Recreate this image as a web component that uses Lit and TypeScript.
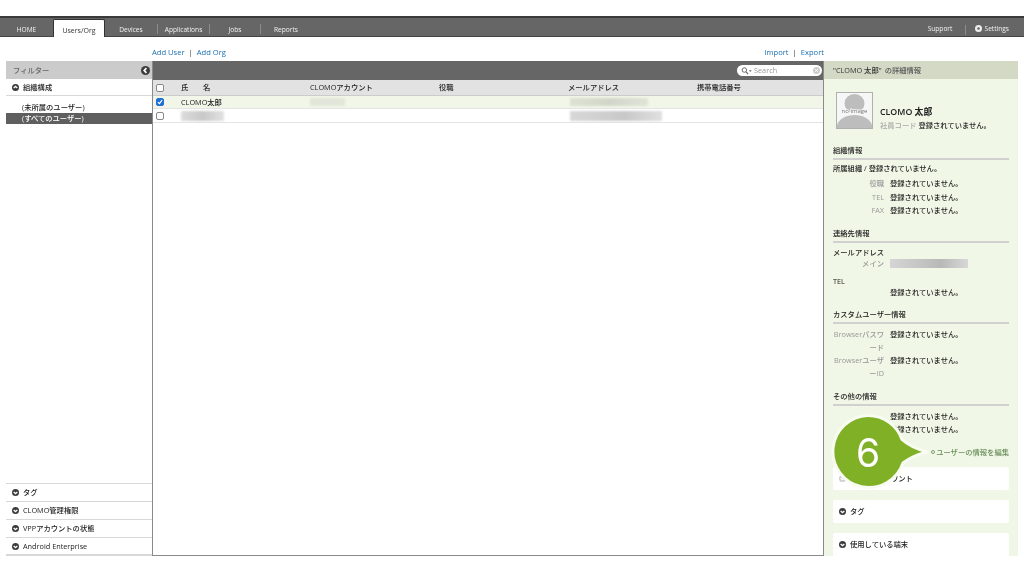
import { LitElement, html, css, svg } from "lit";
import { customElement } from "lit/decorators.js";

const dot = (dir: "up" | "down" | "left", size = 7) => {
  const p = dir === "up" ? "M2.4 5.8 L5 3.3 L7.6 5.8" : dir === "down" ? "M2.4 4.2 L5 6.7 L7.6 4.2" : "M6 2.4 L3.6 5 L6 7.6";
  return html`<svg class="dot" width=${size} height=${size} viewBox="0 0 10 10">
    <circle cx="5" cy="5" r="5" fill="#3c3c3c"></circle>
    ${svg`<path d=${p} fill="none" stroke="#fff" stroke-width="1.9"></path>`}
  </svg>`;
};

const NONE = "登録されていません。";

@customElement("app-root")
export class AppRoot extends LitElement {
  static styles = css`
    :host {
      display: block;
      width: 1024px;
      height: 576px;
      overflow: hidden;
      position: relative;
      background: #fff;
      color: #222;
      font-family: "Open Sans", "Noto Sans CJK JP", sans-serif;
      font-size: 7.3px;
      font-weight: 500;
      line-height: 11px;
      filter: blur(0.25px);
    }
    .dot { flex: none; display: block; }
    .nav {
      margin-top: 16px;
      height: 21px;
      box-sizing: border-box;
      border-top: 2px solid #3a3a3a;
      border-bottom: 1px solid #444;
      background: #666;
      display: flex;
      align-items: stretch;
      color: #f2f2f2;
      font-size: 6.6px;
    }
    .tab { display: flex; align-items: center; justify-content: center; padding-top: 4px; box-sizing: border-box; flex: none; }
    .tab.home { width: 53px; }
    .tab.active {
      width: 52px;
      margin-top: 1px;
      margin-bottom: -1px;
      padding-top: 3px;
      background: #fff;
      color: #333;
      border: 1px solid #333;
      border-bottom: none;
      border-radius: 2px 2px 0 0;
      font-size: 7px;
    }
    .tab.devices { width: 52px; }
    .sep { width: 1px; height: 10px; background: #8c8c8c; flex: none; align-self: center; margin-top: 3px; }
    .tab.apps { width: 51px; }
    .tab.jobs { width: 50px; }
    .tab.reports { width: 50px; }
    .nav-right { margin-left: auto; display: flex; align-items: center; padding-top: 3px; }
    .support { width: 57px; display: flex; justify-content: center; padding-left: 8px; box-sizing: border-box; }
    .settings { display: flex; align-items: center; gap: 3px; padding: 0 15px 0 9px; }
    .settings svg { display: block; }
    .links {
      height: 24px;
      box-sizing: border-box;
      padding: 6px 200px 0 152px;
      display: flex;
      align-items: center;
      justify-content: space-between;
      color: #1a6fb0;
      font-size: 7.6px;
    }
    .links .group { display: flex; gap: 4px; align-items: center; }
    .links i { font-style: normal; color: #333; }
    .main { display: flex; margin-left: 6px; width: 1012px; height: 495px; }
    .filter { width: 146px; flex: none; display: flex; flex-direction: column; }
    .filter-head {
      height: 18px;
      background: #cbcbcb;
      color: #666;
      display: flex;
      align-items: center;
      justify-content: space-between;
      padding: 0 2px 0 7px;
      flex: none;
    }
    .frow {
      height: 18px;
      flex: none;
      box-sizing: border-box;
      border-bottom: 1px solid #d8d8d8;
      display: flex;
      align-items: center;
      gap: 4px;
      padding: 0 0 1px 6px;
    }
    .frow.head { height: 17px; padding: 1px 0 0 6px; }
    .frow.last { border-bottom: 2px solid #d8d8d8; padding-bottom: 0; }
    .org { margin-top: 6px; flex: 1; }
    .org div { height: 11px; line-height: 11px; padding-left: 16px; }
    .org .sel { background: #5f5f5f; color: #fff; }
    .bottom { border-top: 1px solid #d8d8d8; }
    .list {
      width: 672px;
      flex: none;
      box-sizing: border-box;
      border-left: 1px solid #8a8a8a;
      border-right: 1px solid #8a8a8a;
      border-bottom: 1px solid #8a8a8a;
      display: flex;
      flex-direction: column;
    }
    .list-head {
      height: 19px;
      background: #666;
      display: flex;
      align-items: center;
      justify-content: flex-end;
      padding-right: 1px;
      flex: none;
    }
    .search {
      width: 85px;
      height: 11px;
      border-radius: 6px;
      background: #fff;
      color: #999;
      display: flex;
      align-items: center;
      padding: 0 2px 0 4px;
      box-sizing: border-box;
      gap: 2px;
    }
    .search span { flex: 1; }
    .cols, .lrow {
      display: grid;
      grid-template-columns: 28px 129px 129px 129px 129px 1fr;
      align-items: center;
      box-sizing: border-box;
      flex: none;
    }
    .cols { height: 16px; background: #e2e2e2; border-bottom: 1px solid #ccc; }
    .lrow { height: 13px; border-bottom: 1px solid #e4e4e4; }
    .lrow.two { height: 14px; }
    .lrow.on { background: #f1f6e8; }
    .cb {
      width: 8px;
      height: 8px;
      margin-left: 3px;
      box-sizing: border-box;
      border: 1px solid #888;
      border-radius: 2px;
      background: #fff;
      display: block;
    }
    .cb.checked { background: #1f6fd8; border-color: #1f6fd8; }
    .cb svg { display: block; }
    .blur { display: block; height: 8px; filter: blur(1px); }
    .b1 { width: 35px; background: #e2e6da; }
    .b2 { width: 78px; margin-left: 2px; background: linear-gradient(90deg, #dde2d4, #d2d6ca 50%, #e0e4d8); }
    .b3 { width: 43px; height: 10px; background: linear-gradient(90deg, #ddd, #c8c8c8 50%, #e2e2e2); }
    .b4 { width: 92px; height: 10px; margin-left: 2px; background: linear-gradient(90deg, #d8d8d8, #c8c8c8 60%, #e0e0e0); }
    .detail { width: 194px; flex: none; overflow: hidden; background: #f0f7e6; display: flex; flex-direction: column; }
    .detail-head {
      height: 18px;
      flex: none;
      background: #d4d9c5;
      display: flex;
      align-items: center;
      padding-left: 9px;
      color: #555;
    }
    .detail-head b { font-weight: 500; color: #333; margin-right: 3px; }
    .body { padding: 12px 9px 0 9px; display: flex; flex-direction: column; flex: none; width: 194px; box-sizing: border-box; }
    .profile { display: flex; height: 38px; padding-left: 3px; align-items: flex-end; gap: 7px; }
    .avatar { display: block; width: 37px; height: 37px; flex: none; }
    .avatar text { font-size: 6px; fill: #7a7a7a; stroke: #f6f6f6; stroke-width: 1.5px; paint-order: stroke; }
    .pname { font-size: 8.8px; line-height: 12px; color: #222; font-weight: 600; margin-bottom: 1px; }
    .pcode { line-height: 12px; margin-bottom: -2px; }
    .muted { color: #aaa; }
    .sec {
      height: 18px;
      box-sizing: border-box;
      border-bottom: 2px solid #d0d0d0;
      line-height: 16px;
      flex: none;
      margin-top: 8px;
    }
    .sec.first { margin-top: 13px; }
    .r { display: grid; grid-template-columns: 51px 1fr; column-gap: 6px; height: 13px; line-height: 13px; flex: none; }
    .r .k { color: #999; text-align: right; white-space: nowrap; }
    .r.tight { height: 11px; line-height: 11px; }
    .plain { height: 13px; line-height: 13px; flex: none; }
    .plain.tight { height: 11px; line-height: 11px; }
    .m1 { margin-top: 1px; }
    .m2 { margin-top: 2px; }
    .m4 { margin-top: 4px; }
    .m7 { margin-top: 7px; }
    .b5 { width: 78px; height: 9px; filter: none; background: linear-gradient(90deg, #d5d5d5, #c4c4c4 40%, #b8b8b8 65%, #d8d8d8); }
    .mail { display: flex; align-items: center; }
    .edit {
      margin-top: 10px;
      height: 12px;
      line-height: 12px;
      text-align: right;
      color: #6b8f5e;
      display: flex;
      justify-content: flex-end;
      align-items: center;
      gap: 1px;
    }
    .ring { width: 4px; height: 4px; border: 1px solid #7fa36f; border-radius: 50%; box-sizing: border-box; }
    .card {
      height: 23px;
      margin-top: 10px;
      background: #fff;
      border-radius: 2px;
      display: flex;
      align-items: center;
      gap: 4px;
      padding-left: 6px;
      flex: none;
    }
    .card.firstc { margin-top: 9px; }
    .card.firstc .dot { opacity: 0.25; }
    .callout { position: absolute; left: 825px; top: 409px; display: block; }
    .callout text { font-family: "Inter", "Liberation Sans", sans-serif; font-size: 39px; font-weight: 400; fill: #fff; }
  `;

  render() {
    return html`
      <div class="nav">
        <div class="tab home">HOME</div>
        <div class="tab active">Users/Org</div>
        <div class="tab devices">Devices</div>
        <div class="sep"></div>
        <div class="tab apps">Applications</div>
        <div class="sep"></div>
        <div class="tab jobs">Jobs</div>
        <div class="sep"></div>
        <div class="tab reports">Reports</div>
        <div class="nav-right">
          <div class="support">Support</div>
          <div class="sep"></div>
          <div class="settings">
            <svg width="7" height="7" viewBox="0 0 10 10"><circle cx="5" cy="5" r="5" fill="#eee"></circle><circle cx="5" cy="5" r="1.8" fill="#666"></circle></svg>
            Settings
          </div>
        </div>
      </div>
      <div class="links">
        <div class="group"><span>Add User</span><i>|</i><span>Add Org</span></div>
        <div class="group"><span>Import</span><i>|</i><span>Export</span></div>
      </div>
      <div class="main">
        <div class="filter">
          <div class="filter-head"><span>フィルター</span>${dot("left", 9)}</div>
          <div class="frow head">${dot("up")}<span>組織構成</span></div>
          <div class="org">
            <div>(未所属のユーザー)</div>
            <div class="sel">(すべてのユーザー)</div>
          </div>
          <div class="bottom">
            <div class="frow">${dot("down")}<span>タグ</span></div>
            <div class="frow">${dot("down")}<span>CLOMO管理権限</span></div>
            <div class="frow">${dot("down")}<span>VPPアカウントの状態</span></div>
            <div class="frow last">${dot("down")}<span>Android Enterprise</span></div>
          </div>
        </div>
        <div class="list">
          <div class="list-head">
            <div class="search">
              <svg width="11" height="8" viewBox="0 0 13 10"><circle cx="3.8" cy="3.8" r="2.8" fill="none" stroke="#666" stroke-width="1.2"></circle><path d="M6 6 L8.4 9" stroke="#666" stroke-width="1.4"></path><path d="M9.5 4 L13 4 L11.2 6.4 Z" fill="#666"></path></svg>
              <span>Search</span>
              <svg width="7" height="7" viewBox="0 0 10 10"><circle cx="5" cy="5" r="5" fill="#ccc"></circle><path d="M3 3 L7 7 M7 3 L3 7" stroke="#fff" stroke-width="1.2"></path></svg>
            </div>
          </div>
          <div class="cols">
            <div><span class="cb"></span></div>
            <div>氏　　名</div><div>CLOMOアカウント</div><div>役職</div><div>メールアドレス</div><div>携帯電話番号</div>
          </div>
          <div class="lrow on">
            <div><span class="cb checked"><svg width="6" height="6" viewBox="0 0 8 8"><path d="M1.2 4.2 L3.2 6.2 L6.8 1.6" fill="none" stroke="#fff" stroke-width="1.6"></path></svg></span></div>
            <div>CLOMO太郎</div><div><span class="blur b1"></span></div><div></div><div><span class="blur b2"></span></div><div></div>
          </div>
          <div class="lrow two">
            <div><span class="cb"></span></div>
            <div><span class="blur b3"></span></div><div></div><div></div><div><span class="blur b4"></span></div><div></div>
          </div>
        </div>
        <div class="detail">
          <div class="detail-head"><b>"CLOMO 太郎"</b>の詳細情報</div>
          <div class="body">
            <div class="profile">
              <svg class="avatar" viewBox="0 0 37 37">
                <rect x="0.5" y="0.5" width="36" height="36" fill="#f6f6f6" stroke="#b0b0b0"></rect>
                <ellipse cx="18.5" cy="11.5" rx="10" ry="9.5" fill="#bdbdbd"></ellipse>
                <path d="M1 36 L1 33 C3 27 10 23 18.5 23 C27 23 34 27 36 33 L36 36 Z" fill="#bdbdbd"></path>
                <text x="18.5" y="20.5" text-anchor="middle" font-family="Open Sans, sans-serif">no image</text>
              </svg>
              <div>
                <div class="pname">CLOMO 太郎</div>
                <div class="pcode"><span class="muted">社員コード</span> ${NONE}</div>
              </div>
            </div>
            <div class="sec first">組織情報</div>
            <div class="plain m2">所属組織 / ${NONE}</div>
            <div class="r m2"><span class="k">役職</span><span>${NONE}</span></div>
            <div class="r m1"><span class="k">TEL</span><span>${NONE}</span></div>
            <div class="r"><span class="k">FAX</span><span>${NONE}</span></div>
            <div class="sec">連絡先情報</div>
            <div class="plain tight m4">メールアドレス</div>
            <div class="r tight"><span class="k">メイン</span><span class="mail"><span class="blur b5"></span></span></div>
            <div class="plain tight m7">TEL</div>
            <div class="r tight"><span></span><span>${NONE}</span></div>
            <div class="sec">カスタムユーザー情報</div>
            <div class="r m4"><span class="k">Browserパスワ</span><span>${NONE}</span></div>
            <div class="r"><span class="k">ード</span><span></span></div>
            <div class="r"><span class="k">Browserユーザ</span><span>${NONE}</span></div>
            <div class="r"><span class="k">ーID</span><span></span></div>
            <div class="sec">その他の情報</div>
            <div class="r m4"><span class="k"></span><span>${NONE}</span></div>
            <div class="r"><span class="k"></span><span>${NONE}</span></div>
            <div class="edit"><span class="ring"></span>ユーザーの情報を編集</div>
            <div class="card firstc">${dot("down")}<span>CLOMOアカウント</span></div>
            <div class="card">${dot("down")}<span>タグ</span></div>
            <div class="card">${dot("down")}<span>使用している端末</span></div>
          </div>
        </div>
      </div>
      <svg class="callout" width="104" height="86" viewBox="0 0 104 86">
        <path d="M43 6.5 A36 36 0 0 1 77 30.5 Q85 38 102 43 Q87 47 78 54 A36 36 0 1 1 43 6.5 Z" fill="#80b026" stroke="#f8fbf2" stroke-width="3"></path>
        <text x="43" y="57.5" text-anchor="middle">6</text>
      </svg>
    `;
  }
}
